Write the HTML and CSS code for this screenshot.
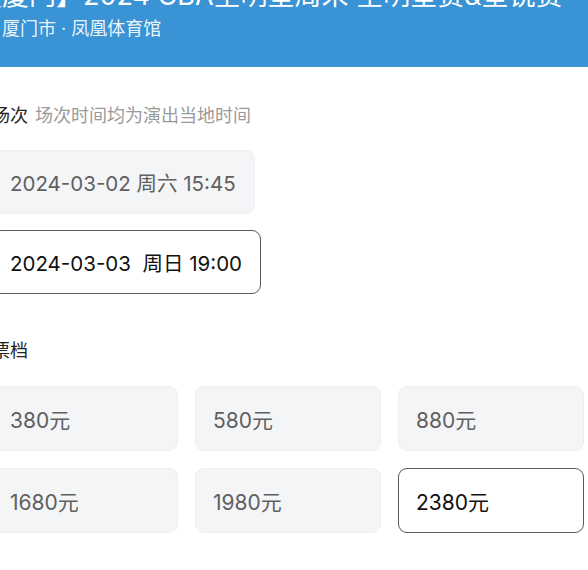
FILE: index.html
```html
<!DOCTYPE html>
<html lang="zh-CN">
<head>
    <meta charset="UTF-8">
    <meta name="viewport" content="width=device-width, initial-scale=1.0">
    <title>CBA全明星周末 - 选择场次</title>
    <link rel="stylesheet" href="styles.css">
</head>
<body>
    <!-- Event Banner -->
    <div class="banner">
        <h1 class="event-title">【厦门】2024 CBA全明星周末 全明星赛&amp;星锐赛</h1>
        <p class="event-venue">厦门市 · 凤凰体育馆</p>
    </div>

    <!-- Options -->
    <div class="content">
        <div class="section-head">
            <span class="section-title">场次</span>
            <span class="section-note">场次时间均为演出当地时间</span>
        </div>
        <div class="session-list">
            <div class="option">2024-03-02 周六 15:45</div>
            <div class="option selected">2024-03-03&nbsp; 周日 19:00</div>
        </div>

        <div class="section-head price-head">
            <span class="section-title">票档</span>
        </div>
        <div class="price-grid">
            <div class="option">380元</div>
            <div class="option">580元</div>
            <div class="option">880元</div>
            <div class="option">1680元</div>
            <div class="option">1980元</div>
            <div class="option selected">2380元</div>
        </div>
    </div>
</body>
</html>
```

FILE: styles.css
```css
/* General Styling */
body {
    font-family: "Inter", "Noto Sans CJK SC", sans-serif;
    margin: 0;
    padding: 0;
    background: #ffffff;
    color: #1a1a1a;
    overflow: hidden;
}

/* Event Banner */
.banner {
    background-color: #3a93d4;
    color: #ffffff;
    height: 67px;
    padding-left: 2px;
    overflow: hidden;
}

.event-title {
    margin: -18px 0 0 -27px;
    font-size: 27px;
    font-weight: normal;
    line-height: 27px;
    white-space: nowrap;
}

.event-venue {
    margin: 8px 0 0 0;
    font-size: 18px;
    line-height: 24px;
    color: rgba(255, 255, 255, 0.92);
}

/* Options */
.content {
    margin: 0 4px 0 -8px;
    padding-top: 37px;
}

.section-head {
    display: flex;
    align-items: center;
    gap: 7px;
    font-size: 18px;
    line-height: 24px;
}

.section-title {
    color: #222;
}

.section-note {
    color: #9a9a9a;
}

.price-head {
    margin-top: 45px;
}

.session-list {
    display: flex;
    flex-direction: column;
    align-items: flex-start;
    gap: 16px;
    margin-top: 22px;
}

.option {
    display: flex;
    align-items: center;
    box-sizing: border-box;
    height: 64px;
    padding: 0 18px 0 17px;
    background-color: #f4f5f7;
    border: 1px solid #eceef1;
    border-radius: 9px;
    color: #606060;
    font-size: 20.5px;
    white-space: nowrap;
}

.option.selected {
    background-color: #ffffff;
    border-color: #5a5a5a;
    color: #111;
}

.price-grid {
    display: grid;
    grid-template-columns: repeat(3, 1fr);
    gap: 17px;
    margin-top: 23px;
}

.price-grid .option {
    height: 65px;
    font-size: 21px;
}
```
